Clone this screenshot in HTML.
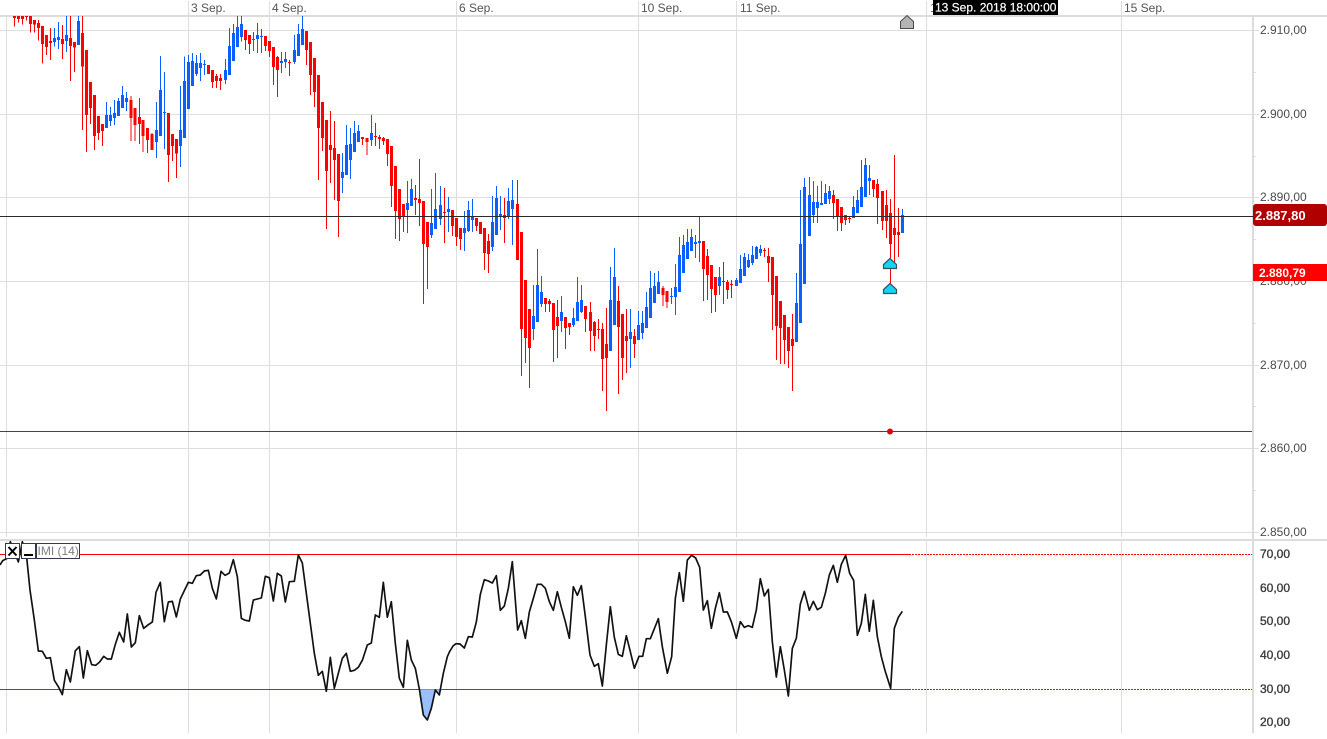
<!DOCTYPE html>
<html>
<head>
<meta charset="utf-8">
<title>Chart</title>
<style>
html,body{margin:0;padding:0;background:#fff;width:1327px;height:739px;overflow:hidden}
svg{display:block}
text{font-family:"Liberation Sans",Arial,sans-serif;font-size:12px}
.ax{fill:#4a4a4a}
.dt{fill:#555}
.os{fill:#3a3a3a;stroke:#3a3a3a;stroke-width:.35px}
.bd{fill:#fff;font-weight:bold}
</style>
</head>
<body>
<svg xmlns="http://www.w3.org/2000/svg" width="1327" height="739" viewBox="0 0 1327 739">
<!-- grid -->
<g shape-rendering="crispEdges" fill="none" stroke="#dedede" stroke-width="1">
<path d="M0 30.5H1259M0 114.5H1259M0 197.5H1259M0 281.5H1259M0 365.5H1259M0 448.5H1259M0 532.5H1259"/>
<path d="M6.5 16V537M6.5 541V733M188.5 1V537M188.5 541V733M269.5 1V537M269.5 541V733M456.5 1V537M456.5 541V733M638.5 1V537M638.5 541V733M736.5 1V537M736.5 541V733M926.5 1V537M926.5 541V733M1121.5 1V537M1121.5 541V733"/>
<path d="M1254 72.5H1256M1254 156.5H1256M1254 239.5H1256M1254 323.5H1256M1254 406.5H1256M1254 490.5H1256"/>
</g>
<g shape-rendering="crispEdges" fill="#dcdcdc">
<rect x="0" y="15" width="1327" height="2"/>
<rect x="0" y="539" width="1327" height="2"/>
<rect x="1252" y="16" width="2" height="717"/>
</g>
<!-- candles -->
<g shape-rendering="crispEdges" fill="none">
<g transform="scale(.33333)">
<path stroke="#f00" stroke-width="3" d="M43 48V80M55 48V68M67 48V74M79 48V62M91 48V98M103 60V98M115 60V122M127 78V190M139 105V165M151 84V180M187 75V177M211 48V243M223 126V216M247 48V390M259 150V456M271 246V372M283 285V450M295 348V420M307 372V438M393 288V423M405 324V423M418 294V432M429 360V456M442 384V459M456 399V450M505 339V546M517 402V483M529 417V534M625 195V222M637 210V264M649 222V264M661 222V270M736 90V150M748 105V162M796 108V153M808 123V171M820 141V255M832 168V291M868 180V228M919 93V195M931 126V285M943 174V321M955 225V540M967 306V453M979 360V687"/>
<path stroke="#f00" stroke-width="9" d="M43 48V54M55 48V57M67 48V57M79 48V51M91 48V72M103 60V74M115 69V84M127 78V132M139 105V141M151 123V129M187 117V132M211 114V138M223 126V142M247 99V200M259 150V345M271 246V324M283 285V408M295 348V399M307 372V393M393 300V354M405 324V375M418 351V372M429 360V408M442 384V420M456 402V450M505 339V465M517 402V438M529 417V460M625 195V222M637 210V246M649 228V243M661 234V243M736 90V120M748 105V132M796 108V138M808 123V153M820 141V201M832 171V210M868 186V189M919 93V150M931 126V225M943 174V276M955 225V384M967 306V414M979 360V513"/>
<path stroke="#0b5fff" stroke-width="3" d="M163 84V140M175 66V147M199 48V156M235 48V135M319 306V384M331 321V378M343 300V375M355 294V348M367 258V324M379 276V333M469 306V474M481 168V408M493 216V447M541 258V501M553 170V414M565 165V327M577 159V258M589 165V228M601 159V243M613 180V225M676 177V252M688 84V225M700 72V183M712 48V141M724 48V125M760 96V153M772 69V159M784 87V159M844 156V219M856 156V204M883 105V192M895 72V168M907 48V135"/>
<path stroke="#0b5fff" stroke-width="9" d="M163 114V126M175 111V120M199 105V123M235 63V135M319 345V384M331 345V363M343 339V354M355 303V348M367 285V324M379 294V306M469 390V426M481 270V408M493 336V339M541 390V438M553 243V414M565 186V327M577 183V258M589 189V222M601 189V204M613 192V195M676 210V240M688 138V225M700 99V183M712 81V141M724 72V111M760 117V120M772 105V117M784 108V111M844 183V189M856 177V186M883 150V186M895 102V168M907 87V135"/>
</g>
<g transform="translate(310 100) scale(.33333)">
<path stroke="#f00" stroke-width="3" d="M61 33V249M73 63V300M85 162V411M157 111V135M171 114V165M196 69V138M208 105V147M220 111V135M232 117V198M244 138V321M256 198V417M268 267V423M280 312V396M316 255V345M328 177V378M340 303V612M352 366V567M403 264V429M427 330V408M439 354V438M451 384V450M499 354V393M511 366V402M523 384V510M535 402V519M583 294V429M622 240V480M634 396V828M646 540V789M658 627V864M706 594V636M718 597V636M730 609V786M742 600V774M766 651V747M778 669V705M826 618V696M841 606V753M853 663V753M865 657V717M877 669V873M889 624V933M925 558V882M937 642V840M949 627V819M973 687V774"/>
<path stroke="#f00" stroke-width="9" d="M61 135V150M73 144V180M85 162V303M157 111V117M171 114V126M196 108V111M208 111V117M220 114V123M232 117V162M244 138V258M256 198V333M268 267V357M280 312V351M316 294V300M328 297V309M340 303V432M352 366V441M403 336V339M427 330V378M439 354V411M451 384V417M499 354V378M511 366V402M523 384V459M535 423V462M583 345V354M622 312V480M634 396V687M646 540V714M658 627V744M706 594V612M718 603V612M730 609V690M742 651V678M766 651V684M778 669V681M826 618V657M841 636V693M853 666V708M865 687V690M877 687V777M889 732V774M925 603V681M937 642V774M949 708V723M973 708V732"/>
<path stroke="#0b5fff" stroke-width="3" d="M97 159V279M109 75V225M121 84V237M133 63V156M145 75V126M184 45V138M292 243V399M304 237V318M364 267V414M376 219V387M391 258V375M415 291V396M463 333V453M475 303V396M487 297V396M547 288V453M559 258V405M571 288V390M595 264V357M607 240V435M670 555V720M682 447V666M694 528V621M754 588V696M790 624V681M802 531V663M814 555V639M901 501V753M913 444V675M961 627V804M985 633V720"/>
<path stroke="#0b5fff" stroke-width="9" d="M97 216V234M109 135V225M121 132V180M133 99V156M145 93V126M184 99V120M292 309V330M304 267V318M364 369V405M376 327V387M391 315V357M415 327V336M463 384V399M475 330V393M487 348V360M547 366V441M559 294V405M571 342V351M595 303V351M607 300V327M670 648V687M682 555V666M694 576V612M754 636V663M790 654V675M802 606V663M814 600V636M901 600V753M913 531V675M961 696V717M985 675V720"/>
</g>
<g transform="translate(620 140) scale(.33333)">
<path stroke="#f00" stroke-width="3" d="M129 438V498M141 453V504M250 303V483M262 327V480M274 375V519M286 411V516M310 366V492M322 420V477M334 420V474M433 324V351M445 324V426M457 351V570M469 408V660M481 483V672M493 525V672M505 561V684M517 522V753M640 150V237M652 177V273M664 201V273M676 225V255M688 231V249M760 120V171M772 117V252M787 153V270M799 150V294M811 177V396M823 45V369M835 204V351"/>
<path stroke="#f00" stroke-width="9" d="M129 444V465M141 453V486M250 303V387M262 348V405M274 375V447M286 411V465M310 423V426M322 426V450M334 432V435M433 330V333M445 348V369M457 351V465M469 408V558M481 483V564M493 525V600M505 561V633M517 597V618M640 165V189M652 177V228M664 201V249M676 225V240M688 234V237M760 120V147M772 132V174M787 153V243M799 195V243M811 219V312M823 264V285M835 276V285"/>
<path stroke="#0b5fff" stroke-width="3" d="M67 513V597M79 456V564M91 393V534M103 399V489M115 393V462M154 444V492M166 372V525M178 291V456M190 285V399M202 267V357M214 267V333M226 285V354M238 231V366M298 381V465M349 414V438M361 345V429M373 339V408M385 342V384M397 318V375M409 318V357M421 315V348M529 399V606M541 150V549M553 114V432M568 111V288M580 123V249M592 138V249M604 123V195M616 132V192M628 138V192M700 168V234M712 150V219M724 60V201M736 54V171M748 75V165M847 207V279"/>
<path stroke="#0b5fff" stroke-width="9" d="M67 549V579M79 501V564M91 444V534M103 438V489M115 426V462M154 468V471M166 441V471M178 345V456M190 315V399M202 306V357M214 291V333M226 306V312M238 303V309M298 411V438M349 420V438M361 387V429M373 351V408M385 360V381M397 345V369M409 321V357M421 327V339M529 489V606M541 312V549M553 141V432M568 165V288M580 186V225M592 186V204M604 189V195M616 159V192M628 153V177M700 201V234M712 180V219M724 141V201M736 75V171M748 114V123M847 225V279"/>
</g>
<!-- horizontal level lines -->
<path stroke="#2b2b2b" d="M0 216.5H1253"/>
<path stroke="#e00000" d="M0 431.5H1252"/>
<path stroke="#f00" d="M890.5 262V289"/>
<path stroke="#f00" d="M0 554.5H909"/>
<path stroke="#f00" stroke-dasharray="2 1" d="M909 554.5H1252"/>
<path stroke="#0c5cd9" d="M0 689.5H909"/>
<path stroke="#0c5cd9" stroke-dasharray="2 1" d="M909 689.5H1252"/>
</g>
<circle cx="890" cy="431.5" r="3" fill="#e60000"/>
<!-- markers -->
<path d="M900.5 28.5H913.5V21.5L907 15.5L900.5 21.5Z" fill="#b4b4b4" stroke="#4a4a4a" stroke-width="1"/>
<path d="M883.5 268.5H896.5V264.5L890 258.5L883.5 264.5Z" fill="#16d3f5" stroke="#2f5560" stroke-width="1.2"/>
<path d="M883.5 293.5H896.5V289.5L890 283.5L883.5 289.5Z" fill="#16d3f5" stroke="#2f5560" stroke-width="1.2"/>
<!-- indicator -->
<g transform="translate(0 530) scale(.33333)">
<path fill="#99bfff" d="M1258 478L1270 555L1282 570L1294 535L1306 480L1318 495L1325 478Z"/>
<path fill="#99bfff" d="M178 478L187 494L192 478Z"/>
<path fill="none" stroke="#111" stroke-width="5" stroke-linejoin="round" d="M0 105L8 92L20 86L31 35L37 50L45 70L55 96L67 35L79 72L90 180L103 270L115 363L127 364L139 385L151 383L163 451L175 470L187 494L199 419L211 456L226 362L238 350L250 444L262 362L275 404L287 406L299 396L311 379L322 387L334 387L346 343L358 307L371 336L382 252L394 351L406 338L418 257L431 295L445 284L457 276L468 187L481 157L493 275L505 216L517 214L529 261L541 207L553 182L565 157L577 160L589 137L601 135L613 123L625 121L637 175L649 207L663 124L675 136L688 129L700 89L712 140L724 265L736 271L748 273L760 210L772 207L784 204L796 139L808 143L820 213L832 130L844 138L856 216L868 155L883 154L895 75L907 99L919 190L931 280L943 370L955 436L967 424L979 484L991 382L1003 475L1015 430L1027 385L1039 370L1051 424L1063 421L1075 412L1087 391L1102 345L1114 339L1126 255L1138 262L1150 157L1162 262L1174 215L1186 340L1198 445L1210 472L1222 331L1234 390L1246 415L1258 477L1270 555L1282 570L1294 535L1306 480L1318 495L1330 430L1342 380L1350 362"/>
</g>
<g transform="translate(450 530) scale(.33333)">
<path fill="#99bfff" d="M1009 478L1015 498L1021 478Z"/>
<path fill="none" stroke="#111" stroke-width="5" stroke-linejoin="round" d="M0 363L9 348L18 341L30 342L43 354L55 320L67 321L79 276L91 193L103 149L115 153L127 159L139 137L151 241L163 228L175 175L187 95L203 300L214 272L226 325L238 246L250 205L262 163L274 163L286 175L298 215L310 241L322 185L334 232L346 275L358 325L370 170L382 196L394 167L406 260L420 375L433 409L445 401L457 468L469 345L481 230L493 322L505 373L517 379L529 317L541 365L553 415L567 379L578 379L589 326L601 326L613 296L625 266L637 350L652 430L665 380L676 205L688 128L700 214L712 90L725 76L737 84L749 112L760 240L772 212L784 295L796 235L808 188L820 246L832 246L844 275L859 325L871 275L883 292L895 287L907 292L919 240L931 146L943 198L955 178L967 335L979 441L991 350L1003 420L1015 498L1027 355L1039 325L1051 222L1063 184L1078 241L1090 214L1102 239L1114 232L1126 190L1138 135L1150 106L1162 157L1174 103L1187 76L1199 130L1211 151L1222 316L1234 280L1246 193L1258 304L1270 211L1282 320L1294 380L1306 425L1322 475L1333 295L1345 262L1357 244"/>
</g>
<!-- indicator buttons -->
<g fill="#fff" stroke="#333a45" stroke-width="1" shape-rendering="crispEdges">
<rect x="5.5" y="543.5" width="14" height="15"/>
<rect x="21.5" y="543.5" width="14" height="15"/>
<rect x="36.5" y="543.5" width="43" height="15"/>
</g>
<path d="M8.5 547L16.5 555.5M16.5 547L8.5 555.5" stroke="#000" stroke-width="2" fill="none"/>
<rect x="24" y="554" width="9" height="2" fill="#000"/>
<text x="37.5" y="555" fill="#7f7f7f" font-size="12">IMI (14)</text>
<!-- date labels -->
<text class="dt" x="191" y="12">3 Sep.</text>
<text class="dt" x="272" y="12">4 Sep.</text>
<text class="dt" x="459" y="12">6 Sep.</text>
<text class="dt" x="641" y="12">10 Sep.</text>
<text class="dt" x="740" y="12">11 Sep.</text>
<text class="dt" x="930" y="12">1</text>
<text class="dt" x="1124" y="12">15 Sep.</text>
<rect x="933" y="0" width="125" height="15" fill="#000" shape-rendering="crispEdges"/>
<text x="935" y="11.5" fill="#fff" stroke="#fff" stroke-width=".2">13 Sep. 2018 18:00:00</text>
<!-- price axis -->
<text class="ax" x="1260" y="34">2.910,00</text>
<text class="ax" x="1260" y="118">2.900,00</text>
<text class="ax" x="1260" y="201">2.890,00</text>
<text class="ax" x="1260" y="285">2.880,00</text>
<text class="ax" x="1260" y="369">2.870,00</text>
<text class="ax" x="1260" y="452">2.860,00</text>
<text class="ax" x="1260" y="536">2.850,00</text>
<rect x="1253" y="204" width="74" height="22" rx="3" fill="#b00000"/>
<text class="bd" x="1255" y="220" style="font-size:13px">2.887,80</text>
<rect x="1253" y="264" width="74" height="17" fill="#f00" shape-rendering="crispEdges"/>
<text class="bd" x="1259" y="277">2.880,79</text>
<!-- oscillator axis -->
<text class="os" x="1260" y="558">70,00</text>
<text class="os" x="1260" y="592">60,00</text>
<text class="os" x="1260" y="625">50,00</text>
<text class="os" x="1260" y="659">40,00</text>
<text class="os" x="1260" y="693">30,00</text>
<text class="os" x="1260" y="726">20,00</text>
</svg>
</body>
</html>
